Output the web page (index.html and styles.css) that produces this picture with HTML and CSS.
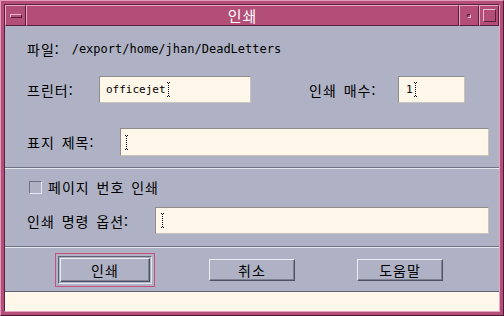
FILE: index.html
```html
<!DOCTYPE html>
<html lang="ko">
<head>
<meta charset="UTF-8">
<title>인쇄</title>
<link rel="stylesheet" href="styles.css">
</head>
<body>

<div class="window">
  <div class="frame">
    <div class="titlebar">
      <div class="tb-btn menu-btn"><span class="menu-bar"></span></div>
      <div class="tb-title">인쇄</div>
      <div class="tb-btn min-btn"><span class="min-dot"></span></div>
      <div class="tb-btn max-btn"><span class="max-box"></span></div>
    </div>

    <div class="content">
      <div class="section sec-top">
        <div class="row row-file">
          <span class="label">파일:</span>
          <span class="path">/export/home/jhan/DeadLetters</span>
        </div>
        <div class="row row-printer">
          <span class="label lbl-printer">프린터:</span>
          <div class="field f-printer">officejet<span class="caret"></span></div>
          <span class="label lbl-copies">인쇄 매수:</span>
          <div class="field f-copies">1<span class="caret"></span></div>
        </div>
        <div class="row row-cover">
          <span class="label lbl-cover">표지 제목:</span>
          <div class="field f-cover"><span class="caret"></span></div>
        </div>
      </div>

      <div class="section sec-mid">
        <div class="row row-check">
          <span class="checkbox"></span>
          <span class="label">페이지 번호 인쇄</span>
        </div>
        <div class="row row-options">
          <span class="label lbl-options">인쇄 명령 옵션:</span>
          <div class="field f-options"><span class="caret"></span></div>
        </div>
      </div>

      <div class="section sec-buttons">
        <div class="btn-cell">
          <div class="default-ring"><div class="default-well"><button class="btn">인쇄</button></div></div>
        </div>
        <div class="btn-cell"><button class="btn">취소</button></div>
        <div class="btn-cell"><button class="btn">도움말</button></div>
      </div>
    </div>

    <div class="footer"></div>
  </div>
</div>

</body>
</html>
```

FILE: styles.css
```css
body { margin:0; background:#b24e78; font-family:"Noto Sans CJK KR", "Noto Sans", sans-serif; font-size:14px; color:#000; }

.window {
    width:504px; height:316px; box-sizing:border-box;
    border:1px solid; border-color:#e49abc #4c1a32 #4c1a32 #e49abc;
    padding:3px; background:#b24e78;
}
.frame {
    height:100%; box-sizing:border-box;
    border:1px solid; border-color:#5a2040 #e8a4c4 #e8a4c4 #5a2040;
    display:flex; flex-direction:column;
}

/* title bar */
.titlebar { height:21px; display:flex; flex-shrink:0; }
.tb-btn, .tb-title {
    box-sizing:border-box; height:21px;
    border:1px solid; border-color:#eaa6c6 #5a2040 #5a2040 #eaa6c6;
    background:#b24e78;
    display:flex; align-items:center; justify-content:center;
}
.menu-btn { width:21px; }
.tb-title { flex:1; color:#fff; font-size:15px; line-height:19px; letter-spacing:1px; }
.min-btn, .max-btn { width:20px; }
.menu-bar { width:12px; height:4px; box-sizing:border-box; border:1px solid; border-color:#f0b8d0 #5a2040 #5a2040 #f0b8d0; background:#b24e78; }
.min-dot { width:4px; height:4px; box-sizing:border-box; border:1px solid; border-color:#5a2040 #f0b8d0 #f0b8d0 #5a2040; }
.max-box { width:13px; height:13px; box-sizing:border-box; border:1px solid; border-color:#f0b8d0 #5a2040 #5a2040 #f0b8d0; }

/* body of dialog */
.content { background:#aeb2c4; flex-shrink:0; }
.section { padding:0 10px 0 22px; }
.row { display:flex; align-items:center; }
.label { white-space:nowrap; letter-spacing:1px; word-spacing:2px; }

.sec-top { padding-top:10px; padding-bottom:11px; border-bottom:1px solid #6e7282; }
.row-file { height:26px; }
.path { margin-left:12px; font-family:"DejaVu Sans Mono", monospace; font-size:12px; }
.row-printer { height:27px; margin-top:14px; }
.lbl-printer { width:72px; }
.lbl-copies { margin-left:58px; width:89px; }
.row-cover { height:28px; margin-top:25px; }
.lbl-cover { width:93px; }

.sec-mid { padding-top:8px; padding-bottom:12px; border-top:1px solid #e6e8f0; border-bottom:1px solid #6e7282; }
.row-check { height:20px; padding-left:2px; }
.checkbox {
    width:13px; height:13px; box-sizing:border-box; margin-right:6px;
    border:1px solid; border-color:#6e7282 #e6e8f0 #e6e8f0 #6e7282; background:#aeb2c4;
}
.row-options { height:27px; margin-top:10px; }
.lbl-options { width:128px; }

.field {
    box-sizing:border-box; height:100%;
    background:#fff7ea; border:1px solid; border-color:#8e8c88 #c8c4bc #c8c4bc #8e8c88;
    display:flex; align-items:center; padding-left:6px;
    font-family:"DejaVu Sans Mono", monospace; font-size:11px;
}
.f-printer { width:152px; }
.f-copies { width:67px; padding-left:7px; }
.f-cover { flex:1; padding-left:3px; }
.f-options { flex:1; padding-left:4px; }

.caret { position:relative; display:inline-block; width:3px; height:15px; margin-left:1px; }
.caret::before { content:""; position:absolute; left:1px; top:1px; bottom:1px; border-left:1px dotted #000; }
.caret::after { content:""; position:absolute; left:0; right:0; top:0; bottom:0; border-top:1px dotted #000; border-bottom:1px dotted #000; }

/* buttons */
.sec-buttons {
    padding:5px 0 4px; height:34px;
    border-top:1px solid #e6e8f0; border-bottom:1px solid #5e6272;
    display:grid; grid-template-columns:148px 148px 148px; justify-content:center;
}
.btn-cell { display:flex; align-items:center; justify-content:center; }
.sec-buttons .btn-cell:first-child { padding-left:2px; }
.default-ring { width:100px; height:34px; box-sizing:border-box; border:1px solid #c8507c; padding:2px; }
.default-well { height:100%; box-sizing:border-box; border:1px solid; border-color:#5e6272 #e6e8f0 #e6e8f0 #5e6272; padding:1px; }
.btn {
    box-sizing:border-box; width:86px; height:22px; padding:0; margin:0;
    background:#aeb2c4; color:#000;
    border:1px solid; border-color:#eceef4 #4e5262 #4e5262 #eceef4;
    box-shadow:inset -1px -1px 0 #7e8292;
    font-family:"Noto Sans CJK KR", sans-serif; font-size:14px; line-height:18px; letter-spacing:1px;
}
.default-well .btn { width:100%; height:100%; }

.footer { flex:1; background:#fff7ea; }
```
